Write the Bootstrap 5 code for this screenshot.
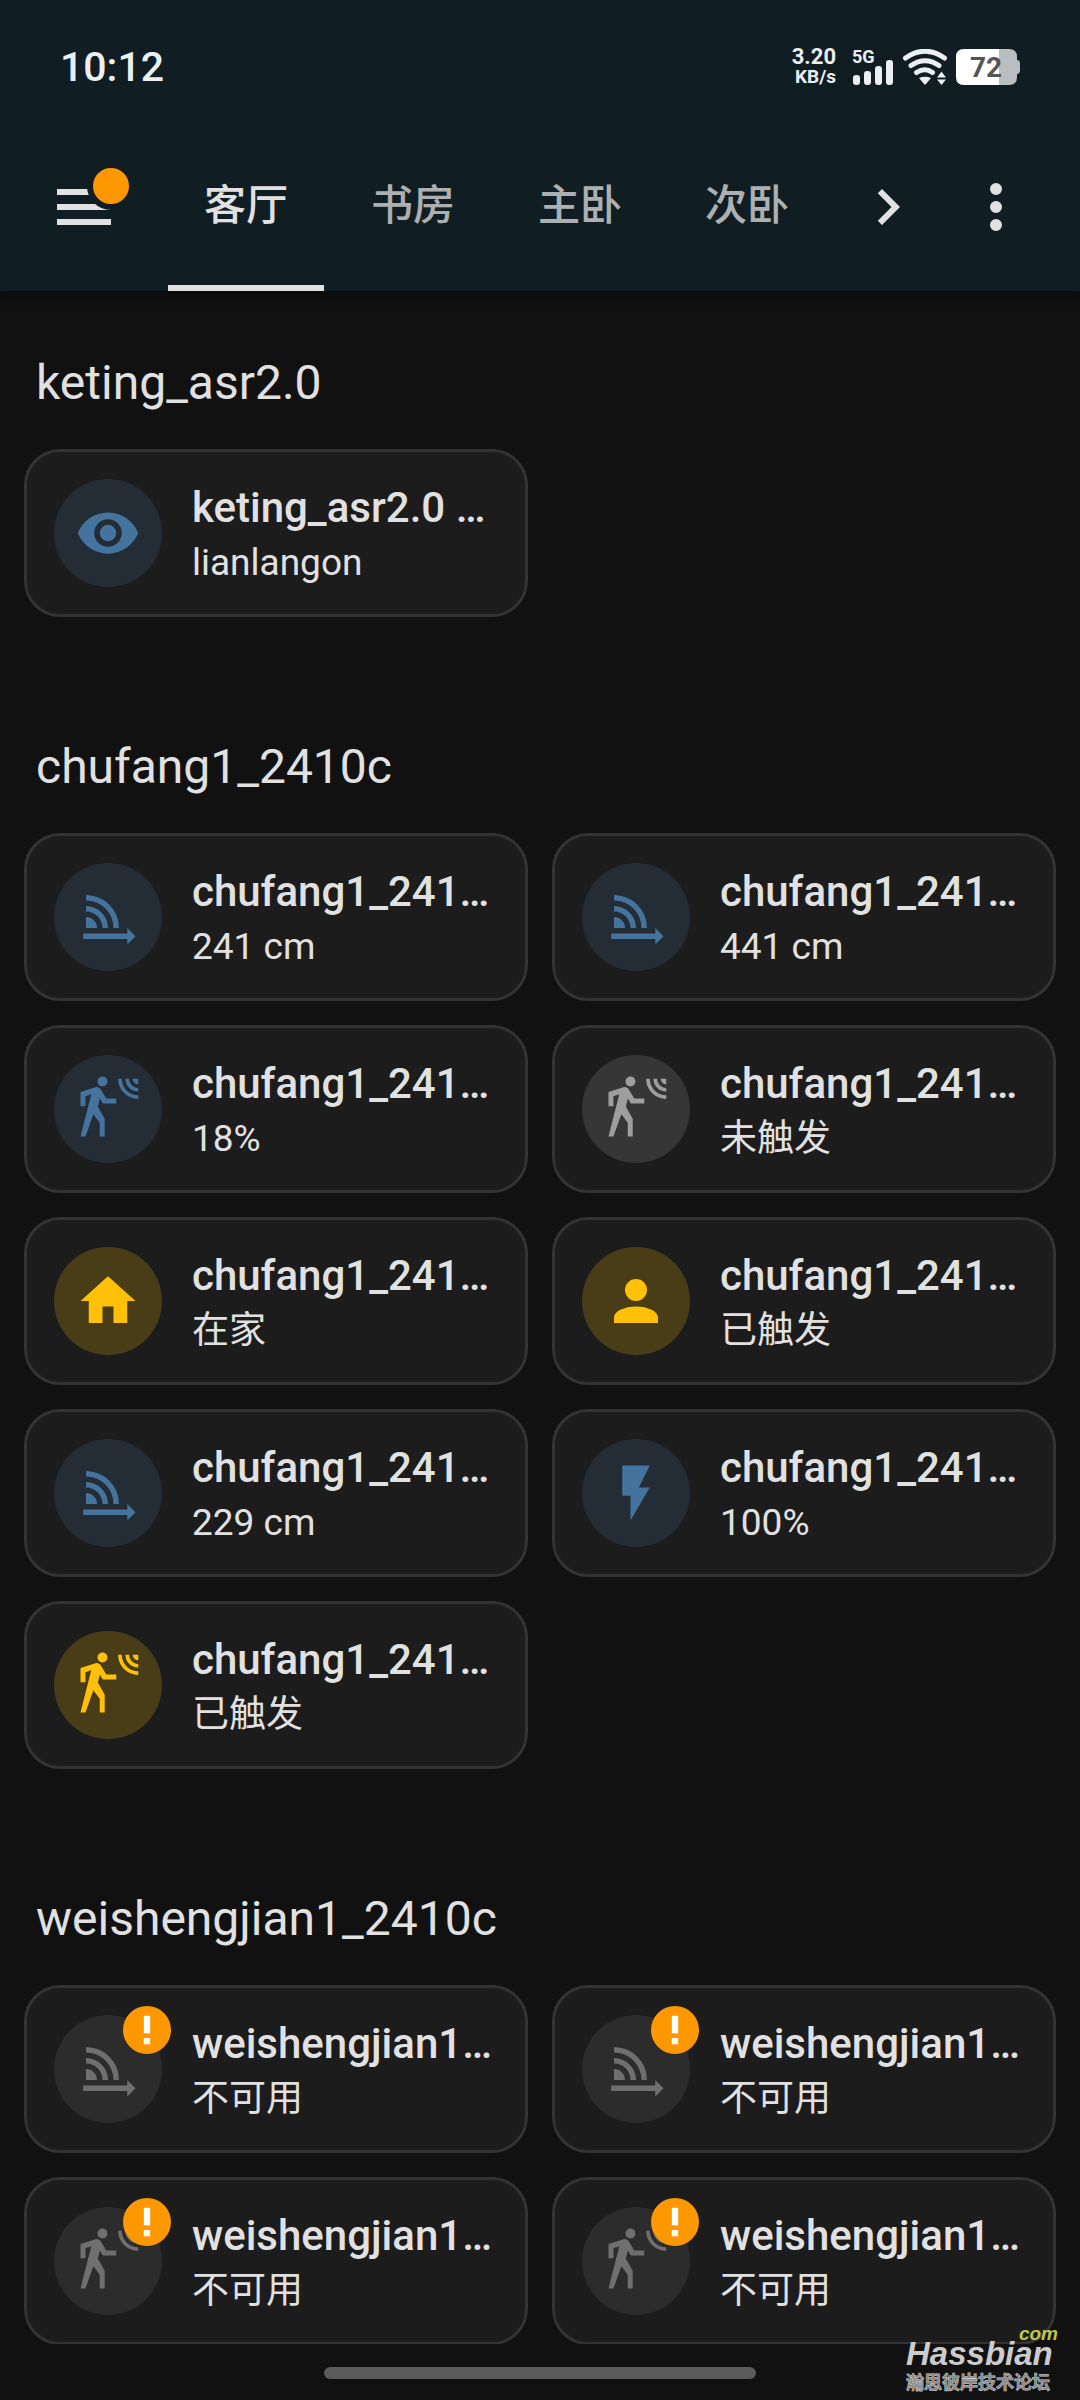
<!DOCTYPE html>
<html lang="zh-CN" data-bs-theme="dark">
<head>
<meta charset="utf-8">
<meta name="viewport" content="width=device-width, initial-scale=1">
<title>客厅</title>
<link href="https://cdn.jsdelivr.net/npm/bootstrap@5.3.0/dist/css/bootstrap.min.css" rel="stylesheet">
<style>
  :root { --ink: #e1e1e1; --page: #111111; --bar: #101e24; --tile: #1c1c1c; --line: #333333; }
  body { background: var(--page); color: var(--ink); font-family: Roboto, "Noto Sans CJK SC", sans-serif; }
  svg { display: block; fill: currentColor; flex: none; }

  .app-bar { background: var(--bar); box-shadow: 0 4px 12px rgba(0,0,0,.5); z-index: 2; }
  .status-row { height: 123px; padding: 11px 60px 0; color: #eceff1; }
  .clock { font-size: 41px; line-height: 48px; font-weight: 500; }
  .speed { font-size: 22px; line-height: 20px; font-weight: 700; }
  .speed small { display: block; font-size: 19px; font-weight: 700; }
  .signal { width: 42px; height: 36px; }
  .signal span { font-size: 18px; line-height: 16px; font-weight: 700; top: 0; left: 0; }
  .battery { width: 64px; height: 36px; }
  .battery span { font-size: 28px; line-height: 38px; font-weight: 700; color: #555; inset: 0 4px 0 0; text-align: center; }

  .tool-row { height: 168px; padding: 0 12px; }
  .icon-btn { width: 144px; height: 144px; padding: 36px; border: 0; background: none; color: var(--ink); }
  .dot { width: 48px; height: 48px; border: 6px solid var(--bar); border-radius: 50%; background: #ff9800; top: 27px; right: 21px; }
  .tabs { gap: 11px; padding-left: 12px; }
  .tabs .nav-link { width: 156px; height: 168px; padding: 0; border-bottom: 6px solid transparent; color: var(--ink);
    font-size: 42px; line-height: 166px; font-weight: 500; text-align: center; border-radius: 0; }
  .tabs .nav-link span { opacity: .75; }
  .tabs .active { border-color: var(--ink); }
  .tabs .active span { opacity: 1; }
  .next-btn { width: 72px; padding: 36px 0; }

  main { min-height: 0; }
  .room { padding: 62px 24px 58px; }
  .room h2 { font-size: 48px; line-height: 60px; font-weight: 400; margin: 0 12px 36px; color: var(--ink); }
  .tiles { --bs-gutter-x: 24px; --bs-gutter-y: 24px; }
  .tile { --bs-card-bg: var(--tile); --bs-card-border-color: var(--line); --bs-card-border-width: 3px;
    --bs-card-border-radius: 36px; --bs-card-color: var(--ink); color: var(--ink);
    padding: 27px; gap: 30px; text-decoration: none; }
  .disc { width: 108px; height: 108px; border-radius: 50%; flex: none; color: #44739e; background: #242d36; }
  .disc.on { color: #ffc107; background: #493d18; }
  .disc.off { color: #9e9e9e; background: #363636; }
  .disc.gone { color: #6f6f6f; background: #2c2c2c; }
  .alert-dot { width: 48px; height: 48px; border-radius: 50%; background: #ff9800; color: #fff; top: -9px; right: -9px; }
  .tile-name { font-size: 42px; line-height: 58px; font-weight: 500; padding-bottom: 2px; }
  .tile-state { font-size: 37px; line-height: 48px; }

  .gesture { height: 56px; background: var(--page); padding-top: 23px; }
  .gesture div { width: 40%; height: 12px; border-radius: 6px; background: #5a5a5a; }
  .stamp { right: 22px; bottom: 6px; width: 152px; color: #cccccc; z-index: 3; }
  .stamp-top { font: italic 700 19px/12px "Liberation Sans", sans-serif; color: #c3c648; text-align: right; }
  .stamp-name { font: italic 700 33px/28px "Liberation Sans", sans-serif; }
  .stamp-sub { font: 500 18px/26px "Noto Sans CJK SC", sans-serif; color: #8c8c8c; -webkit-text-stroke: 1px #cccccc; paint-order: stroke fill; }
</style>
<script src="https://cdn.jsdelivr.net/npm/bootstrap@5.3.0/dist/js/bootstrap.bundle.min.js"></script>
</head>
<body>
<svg width="0" height="0" class="position-absolute" aria-hidden="true">
  <symbol id="i-eye" viewBox="0 0 24 24"><path d="M12,9A3,3 0 0,0 9,12A3,3 0 0,0 12,15A3,3 0 0,0 15,12A3,3 0 0,0 12,9M12,17A5,5 0 0,1 7,12A5,5 0 0,1 12,7A5,5 0 0,1 17,12A5,5 0 0,1 12,17M12,4.5C7,4.5 2.73,7.61 1,12C2.73,16.39 7,19.5 12,19.5C17,19.5 21.27,16.39 23,12C21.27,7.61 17,4.5 12,4.5Z"/></symbol>
  <symbol id="i-distance" viewBox="0 0 24 24"><path d="M4 4A12 12 0 0 1 16 16H14A10 10 0 0 0 4 6ZM4 8A8 8 0 0 1 12 16H10A6 6 0 0 0 4 10ZM4 12A4 4 0 0 1 8 16H4ZM3 18H19V16L22 19L19 22V20H3Z"/></symbol>
  <symbol id="i-motion" viewBox="0 0 24 24"><path d="M10,0.2C9,0.2 8.2,1 8.2,2C8.2,3 9,3.8 10,3.8C11,3.8 11.8,3 11.8,2C11.8,1 11,0.2 10,0.2M15.67,1A7.33,7.33 0 0,0 23,8.33V7A6,6 0 0,1 17,1H15.67M18.33,1C18.33,3.58 20.42,5.67 23,5.67V4.33C21.16,4.33 19.67,2.84 19.67,1H18.33M21,1A2,2 0 0,0 23,3V1H21M7.92,4.03C7.75,4.03 7.58,4.06 7.42,4.11L2,5.8V11H3.8V7.33L5.91,6.67L2,22H3.8L6.67,13.89L9,17V22H10.8V15.59L8.31,11.05L9.04,8.18L10.12,10H15V8.2H11.38L9.38,4.87C9.08,4.37 8.54,4.03 7.92,4.03Z"/></symbol>
  <symbol id="i-home" viewBox="0 0 24 24"><path d="M10,20V14H14V20H19V12H22L12,3L2,12H5V20H10Z"/></symbol>
  <symbol id="i-person" viewBox="0 0 24 24"><path d="M12,4A4,4 0 0,1 16,8A4,4 0 0,1 12,12A4,4 0 0,1 8,8A4,4 0 0,1 12,4M12,14C16.42,14 20,15.79 20,18V20H4V18C4,15.79 7.58,14 12,14Z"/></symbol>
  <symbol id="i-flash" viewBox="0 0 24 24"><path d="M7,2V13H10V22L17,10H13L17,2H7Z"/></symbol>
  <symbol id="i-bang" viewBox="0 0 24 24"><path d="M10,3H14V14H10V3M10,21V17H14V21H10Z"/></symbol>
</svg>

<div class="vh-100 d-flex flex-column overflow-hidden position-relative">
  <header class="app-bar position-relative">
    <div class="status-row d-flex align-items-center justify-content-between">
      <div class="clock">10:12</div>
      <div class="d-flex align-items-center">
        <div class="speed text-end me-3">3.20<small>KB/s</small></div>
        <div class="signal position-relative me-2">
          <span class="position-absolute">5G</span>
          <svg width="42" height="36" viewBox="0 0 42 36"><rect x="1" y="26" width="7" height="10" rx="3"/><rect x="12" y="22" width="7" height="14" rx="3"/><rect x="23" y="17" width="7" height="19" rx="3"/><rect x="34" y="11" width="7" height="25" rx="3"/></svg>
        </div>
        <svg class="me-2" width="46" height="36" viewBox="0 0 46 36"><g fill="none" stroke="currentColor" stroke-width="5" stroke-linecap="round"><path d="M3.500 9Q23-4.500 42.500 9"/><path d="M9 16.500Q23 7 37 16.500"/><path d="M14.500 23.500Q23 18 30.500 23.500"/></g><path d="M17 29Q23 26.500 29 29L24 35Q23 36 22 35ZM35 28.500L39.500 22.500L44 28.500ZM35 30.500H44L39.500 36Z"/></svg>
        <div class="battery position-relative">
          <svg width="64" height="36" viewBox="0 0 64 36"><path fill="#b9bfc1" d="M43 0H53Q61 0 61 8V11Q64 11 64 15V21Q64 25 61 25V28Q61 36 53 36H43Z"/><path fill="#fff" d="M8 0H43V36H8Q0 36 0 28V8Q0 0 8 0Z"/></svg>
          <span class="position-absolute">72</span>
        </div>
      </div>
    </div>
    <div class="tool-row d-flex align-items-center">
      <button type="button" class="icon-btn position-relative" aria-label="菜单">
        <svg width="72" height="72" viewBox="0 0 24 24"><path d="M3,6H21V8H3V6M3,11H21V13H3V11M3,16H21V18H3V16Z"/></svg>
        <span class="dot position-absolute"></span>
      </button>
      <nav class="nav tabs flex-nowrap flex-grow-1">
        <a class="nav-link active" href="#"><span>客厅</span></a>
        <a class="nav-link" href="#"><span>书房</span></a>
        <a class="nav-link" href="#"><span>主卧</span></a>
        <a class="nav-link" href="#"><span>次卧</span></a>
      </nav>
      <button type="button" class="icon-btn next-btn" aria-label="下一页">
        <svg width="72" height="72" viewBox="0 0 24 24"><path d="M8.590,16.580L13.170,12L8.590,7.410L10,6L16,12L10,18L8.590,16.580Z"/></svg>
      </button>
      <button type="button" class="icon-btn" aria-label="更多">
        <svg width="72" height="72" viewBox="0 0 24 24"><path d="M12,16A2,2 0 0,1 14,18A2,2 0 0,1 12,20A2,2 0 0,1 10,18A2,2 0 0,1 12,16M12,10A2,2 0 0,1 14,12A2,2 0 0,1 12,14A2,2 0 0,1 10,12A2,2 0 0,1 12,10M12,4A2,2 0 0,1 14,6A2,2 0 0,1 12,8A2,2 0 0,1 10,6A2,2 0 0,1 12,4Z"/></svg>
      </button>
    </div>
  </header>

  <main class="flex-grow-1 overflow-hidden">
    <section class="room">
      <h2>keting_asr2.0</h2>
      <div class="row row-cols-2 tiles">
        <div class="col"><a href="#" class="card tile flex-row align-items-center">
          <div class="disc d-flex align-items-center justify-content-center"><svg width="66" height="66"><use href="#i-eye"/></svg></div>
          <div class="flex-fill overflow-hidden"><div class="tile-name text-nowrap">keting_asr2.0 …</div><div class="tile-state text-nowrap">lianlangon</div></div>
        </a></div>
      </div>
    </section>

    <section class="room">
      <h2>chufang1_2410c</h2>
      <div class="row row-cols-2 tiles">
        <div class="col"><a href="#" class="card tile flex-row align-items-center">
          <div class="disc d-flex align-items-center justify-content-center"><svg width="66" height="66"><use href="#i-distance"/></svg></div>
          <div class="flex-fill overflow-hidden"><div class="tile-name text-nowrap">chufang1_241…</div><div class="tile-state text-nowrap">241 cm</div></div>
        </a></div>
        <div class="col"><a href="#" class="card tile flex-row align-items-center">
          <div class="disc d-flex align-items-center justify-content-center"><svg width="66" height="66"><use href="#i-distance"/></svg></div>
          <div class="flex-fill overflow-hidden"><div class="tile-name text-nowrap">chufang1_241…</div><div class="tile-state text-nowrap">441 cm</div></div>
        </a></div>
        <div class="col"><a href="#" class="card tile flex-row align-items-center">
          <div class="disc d-flex align-items-center justify-content-center"><svg width="66" height="66"><use href="#i-motion"/></svg></div>
          <div class="flex-fill overflow-hidden"><div class="tile-name text-nowrap">chufang1_241…</div><div class="tile-state text-nowrap">18%</div></div>
        </a></div>
        <div class="col"><a href="#" class="card tile flex-row align-items-center">
          <div class="disc off d-flex align-items-center justify-content-center"><svg width="66" height="66"><use href="#i-motion"/></svg></div>
          <div class="flex-fill overflow-hidden"><div class="tile-name text-nowrap">chufang1_241…</div><div class="tile-state text-nowrap">未触发</div></div>
        </a></div>
        <div class="col"><a href="#" class="card tile flex-row align-items-center">
          <div class="disc on d-flex align-items-center justify-content-center"><svg width="66" height="66"><use href="#i-home"/></svg></div>
          <div class="flex-fill overflow-hidden"><div class="tile-name text-nowrap">chufang1_241…</div><div class="tile-state text-nowrap">在家</div></div>
        </a></div>
        <div class="col"><a href="#" class="card tile flex-row align-items-center">
          <div class="disc on d-flex align-items-center justify-content-center"><svg width="66" height="66"><use href="#i-person"/></svg></div>
          <div class="flex-fill overflow-hidden"><div class="tile-name text-nowrap">chufang1_241…</div><div class="tile-state text-nowrap">已触发</div></div>
        </a></div>
        <div class="col"><a href="#" class="card tile flex-row align-items-center">
          <div class="disc d-flex align-items-center justify-content-center"><svg width="66" height="66"><use href="#i-distance"/></svg></div>
          <div class="flex-fill overflow-hidden"><div class="tile-name text-nowrap">chufang1_241…</div><div class="tile-state text-nowrap">229 cm</div></div>
        </a></div>
        <div class="col"><a href="#" class="card tile flex-row align-items-center">
          <div class="disc d-flex align-items-center justify-content-center"><svg width="66" height="66"><use href="#i-flash"/></svg></div>
          <div class="flex-fill overflow-hidden"><div class="tile-name text-nowrap">chufang1_241…</div><div class="tile-state text-nowrap">100%</div></div>
        </a></div>
        <div class="col"><a href="#" class="card tile flex-row align-items-center">
          <div class="disc on d-flex align-items-center justify-content-center"><svg width="66" height="66"><use href="#i-motion"/></svg></div>
          <div class="flex-fill overflow-hidden"><div class="tile-name text-nowrap">chufang1_241…</div><div class="tile-state text-nowrap">已触发</div></div>
        </a></div>
      </div>
    </section>

    <section class="room pb-0">
      <h2>weishengjian1_2410c</h2>
      <div class="row row-cols-2 tiles">
        <div class="col"><a href="#" class="card tile flex-row align-items-center">
          <div class="disc gone position-relative d-flex align-items-center justify-content-center"><svg width="66" height="66"><use href="#i-distance"/></svg><span class="alert-dot position-absolute d-flex align-items-center justify-content-center"><svg width="38" height="38"><use href="#i-bang"/></svg></span></div>
          <div class="flex-fill overflow-hidden"><div class="tile-name text-nowrap">weishengjian1…</div><div class="tile-state text-nowrap">不可用</div></div>
        </a></div>
        <div class="col"><a href="#" class="card tile flex-row align-items-center">
          <div class="disc gone position-relative d-flex align-items-center justify-content-center"><svg width="66" height="66"><use href="#i-distance"/></svg><span class="alert-dot position-absolute d-flex align-items-center justify-content-center"><svg width="38" height="38"><use href="#i-bang"/></svg></span></div>
          <div class="flex-fill overflow-hidden"><div class="tile-name text-nowrap">weishengjian1…</div><div class="tile-state text-nowrap">不可用</div></div>
        </a></div>
        <div class="col"><a href="#" class="card tile flex-row align-items-center">
          <div class="disc gone position-relative d-flex align-items-center justify-content-center"><svg width="66" height="66"><use href="#i-motion"/></svg><span class="alert-dot position-absolute d-flex align-items-center justify-content-center"><svg width="38" height="38"><use href="#i-bang"/></svg></span></div>
          <div class="flex-fill overflow-hidden"><div class="tile-name text-nowrap">weishengjian1…</div><div class="tile-state text-nowrap">不可用</div></div>
        </a></div>
        <div class="col"><a href="#" class="card tile flex-row align-items-center">
          <div class="disc gone position-relative d-flex align-items-center justify-content-center"><svg width="66" height="66"><use href="#i-motion"/></svg><span class="alert-dot position-absolute d-flex align-items-center justify-content-center"><svg width="38" height="38"><use href="#i-bang"/></svg></span></div>
          <div class="flex-fill overflow-hidden"><div class="tile-name text-nowrap">weishengjian1…</div><div class="tile-state text-nowrap">不可用</div></div>
        </a></div>
      </div>
    </section>
  </main>

  <footer class="gesture flex-shrink-0"><div class="mx-auto"></div></footer>
  <div class="stamp position-absolute text-nowrap">
    <div class="stamp-top">com</div>
    <div class="stamp-name">Hassbian</div>
    <div class="stamp-sub">瀚思彼岸技术论坛</div>
  </div>
</div>
</body>
</html>
